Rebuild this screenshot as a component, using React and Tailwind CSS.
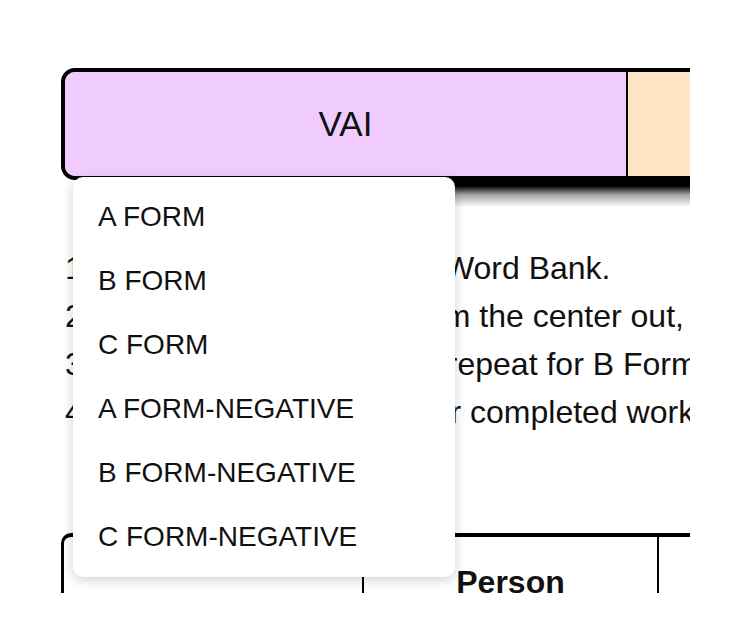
import React from "react";

const forms = [
  "A FORM",
  "B FORM",
  "C FORM",
  "A FORM-NEGATIVE",
  "B FORM-NEGATIVE",
  "C FORM-NEGATIVE",
];

const steps = [
  "1. Fill the blanks using the Word Bank.",
  "2. Fill the circle working from the center out, going clockwise.",
  "3. Complete A Form. Then repeat for B Form and C Form.",
  "4. Take a neat photo of your completed work.",
];

export default function App() {
  return (
    <div className="min-h-screen bg-white pt-[68px] pl-[61px] font-['Liberation_Sans',Arial,sans-serif] text-[#111]">
      <div className="relative w-[629px] h-[525px] overflow-hidden">
        {/* Tab bar */}
        <div className="flex w-[700px] h-[112px] border-4 border-black rounded-[14px] overflow-hidden">
          <div className="w-[563px] shrink-0 bg-[#f0cbfe] border-r-2 border-black flex items-center justify-center text-[35px]">
            VAI
          </div>
          <div className="flex-1 bg-[#ffe4c6]" />
        </div>
        <div className="ml-[16px] h-[27px] bg-[linear-gradient(to_bottom,#000_0%,#000_22%,rgba(0,0,0,0.35)_55%,rgba(255,255,255,0)_100%)]" />

        {/* Instructions */}
        <div className="mt-[37px] pl-[4px] text-[32px] leading-[48px] whitespace-nowrap">
          {steps.map((s) => (
            <p key={s}>{s}</p>
          ))}
        </div>

        {/* Table */}
        <div className="mt-[97px] flex border-t-4 border-l-[3px] border-black rounded-tl-[10px] h-[80px]">
          <div className="w-[300px] shrink-0 border-r-2 border-black" />
          <div className="w-[295px] shrink-0 border-r-2 border-black pt-[27px] text-center text-[32px] leading-[37px] font-bold">
            Person
          </div>
          <div className="flex-1" />
        </div>

        {/* Dropdown menu */}
        <div className="absolute left-[12px] top-[109px] w-[382px] rounded-[10px] bg-white py-[8px] shadow-[0_3px_12px_rgba(0,0,0,0.18)]">
          {forms.map((f) => (
            <div key={f} className="h-[64px] flex items-center pl-[25px] text-[28px]">
              {f}
            </div>
          ))}
        </div>
      </div>
    </div>
  );
}
